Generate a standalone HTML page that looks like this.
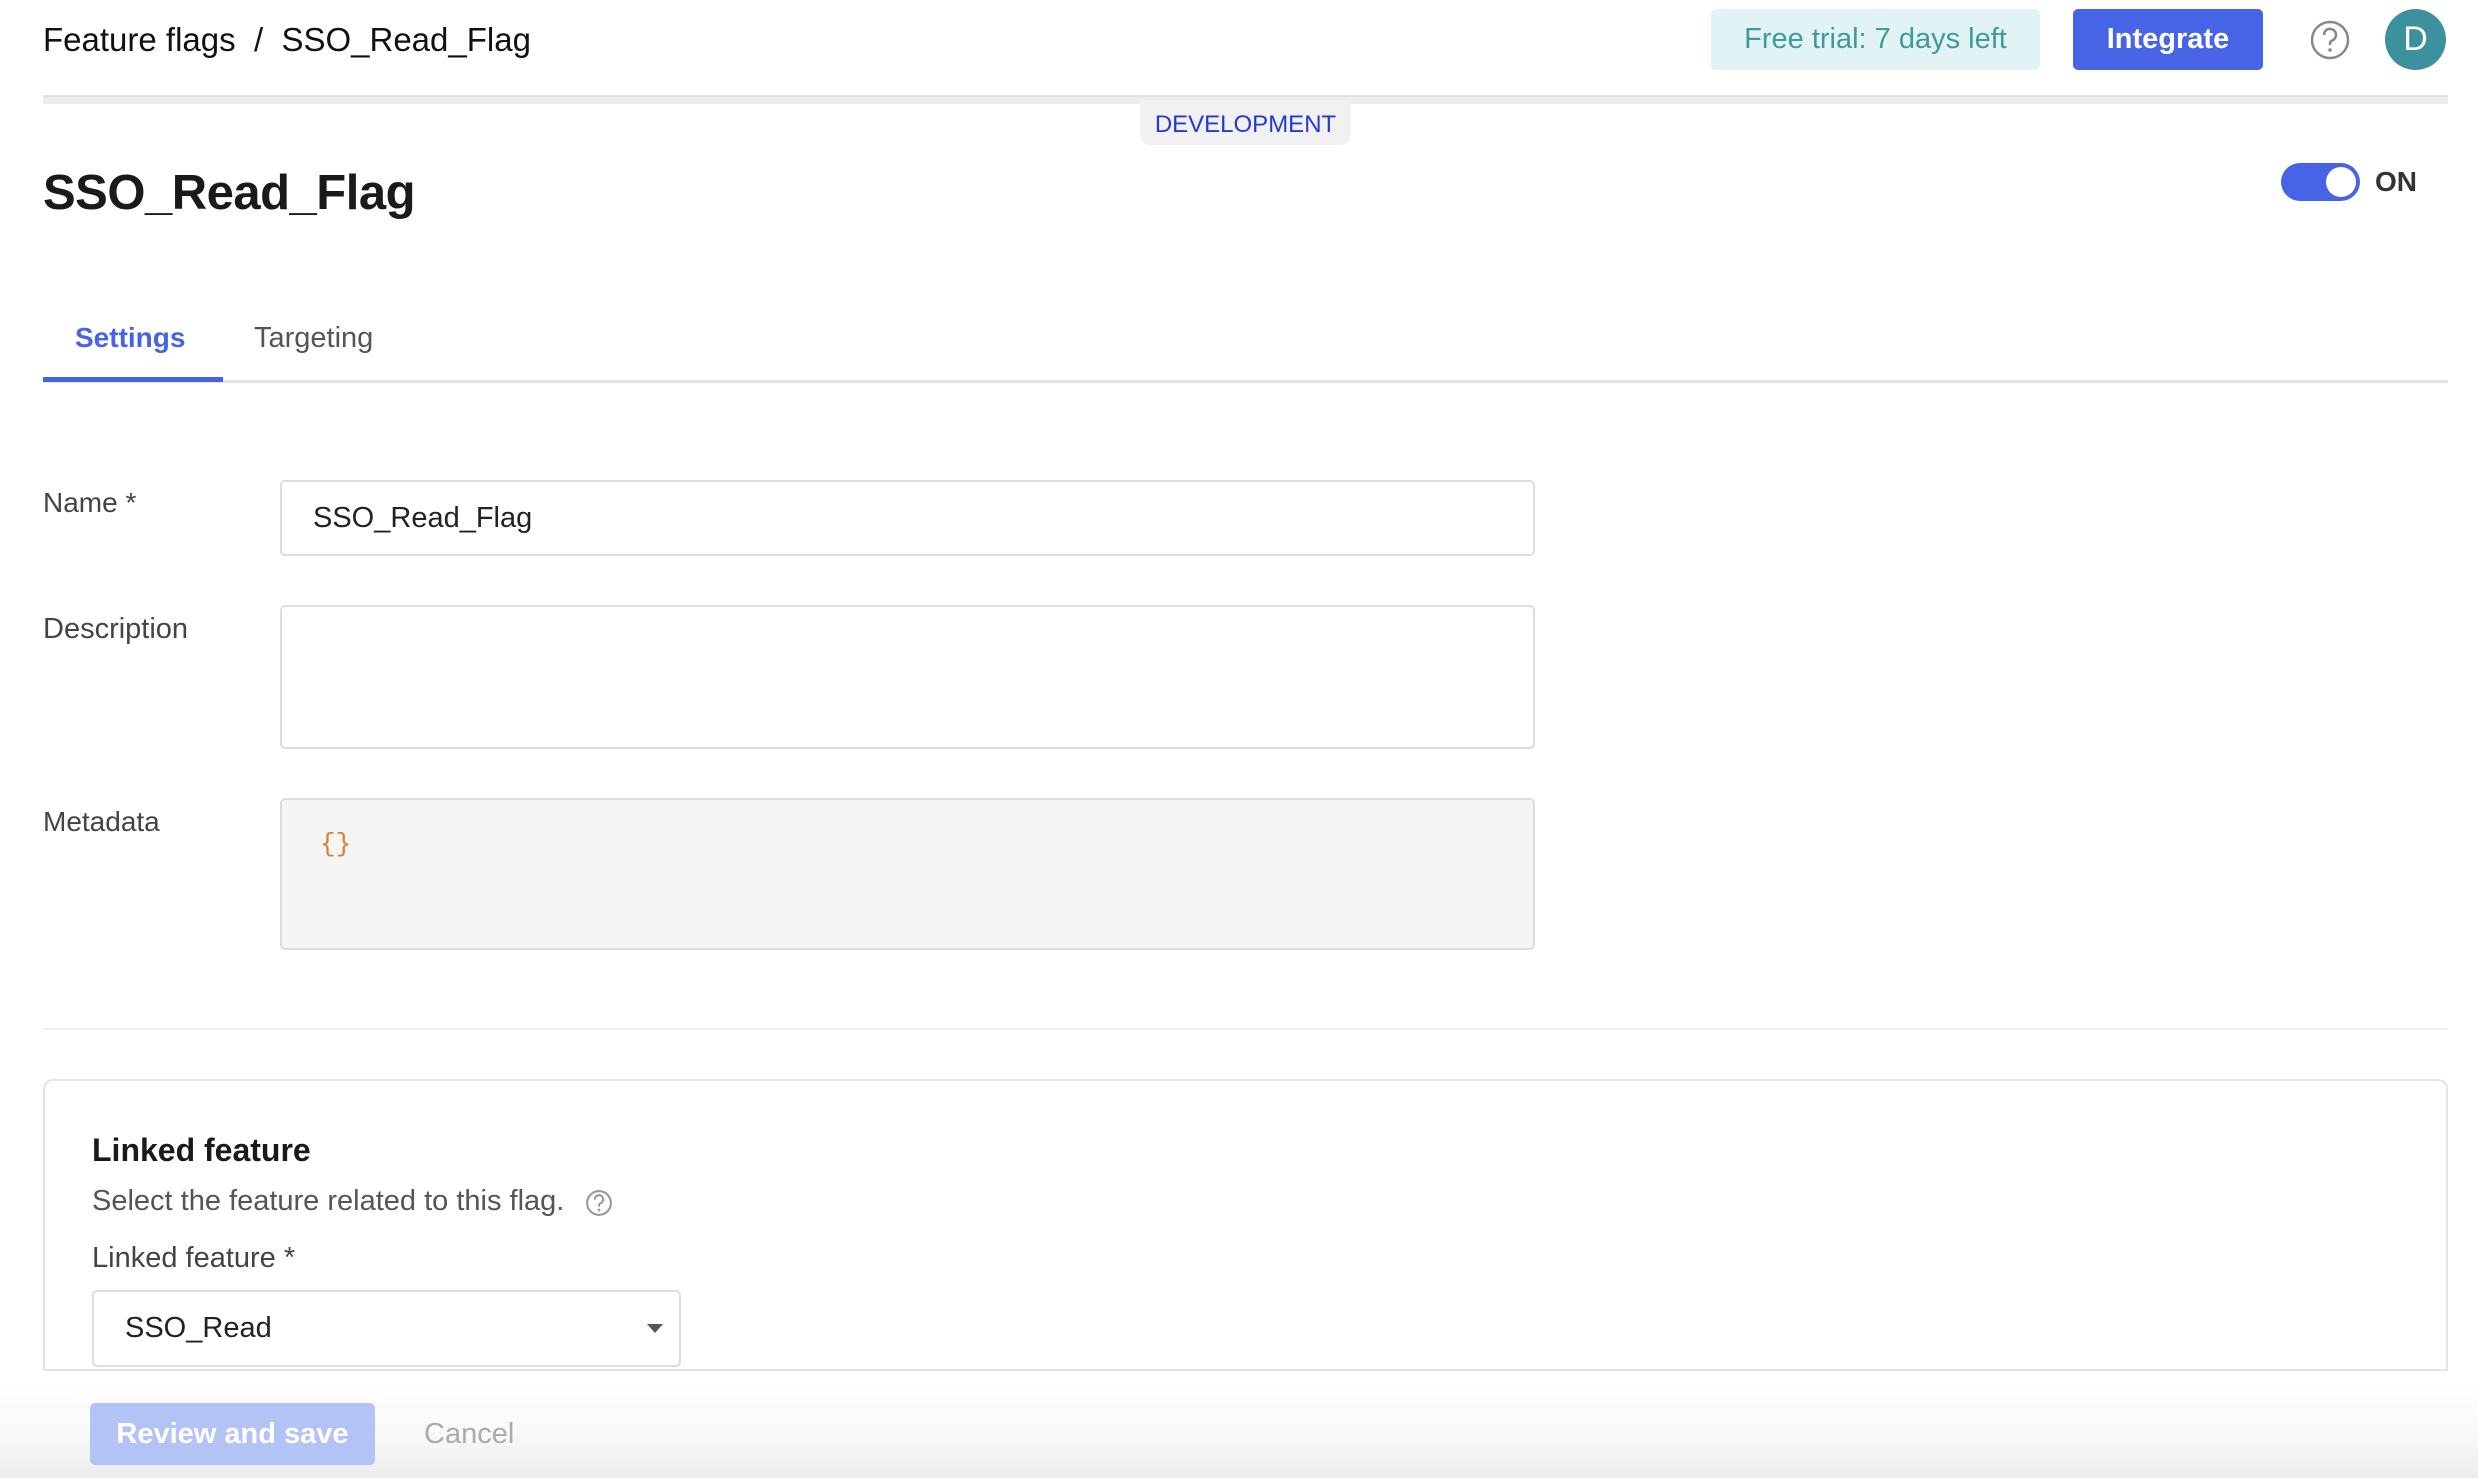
<!DOCTYPE html>
<html><head><meta charset="utf-8"><style>
*{box-sizing:border-box;margin:0;padding:0}
body{width:2478px;height:1478px;overflow:hidden;background:#fff;font-family:"Liberation Sans",sans-serif;color:#1a1a1a;position:relative}
.a{position:absolute}
</style></head><body>
<div class="a" style="left:43px;top:20px;font-size:33px;line-height:40px;color:#111">Feature flags &nbsp;/&nbsp; SSO_Read_Flag</div>
<div class="a" style="left:1711px;top:9px;width:329px;height:61px;background:#e2f3f5;border-radius:5px;color:#3f9a9a;font-size:29px;line-height:61px;text-align:center">Free trial: 7 days left</div>
<div class="a" style="left:2073px;top:9px;width:190px;height:61px;background:#4664e5;border-radius:5px;color:#fff;font-size:29px;line-height:61px;text-align:center;font-weight:bold">Integrate</div>
<svg class="a" style="left:2310px;top:20px" width="40" height="40" viewBox="0 0 40 40"><circle cx="20" cy="20" r="18" fill="none" stroke="#888" stroke-width="2.5"/><path d="M14 15a6 6 0 1 1 8 5.5c-1.5.7-2 1.5-2 3v1.5" fill="none" stroke="#888" stroke-width="2.5"/><circle cx="20" cy="30" r="1.8" fill="#888"/></svg>
<div class="a" style="left:2385px;top:9px;width:61px;height:61px;border-radius:50%;background:#3d919c;color:#fff;font-size:34px;line-height:61px;text-align:center">D</div>
<div class="a" style="left:43px;top:95px;width:2405px;height:9px;background:#ececec;border-top:2px solid #e2e2e2"></div>
<div class="a" style="left:1140px;top:100px;width:211px;height:45px;background:#f1f1f1;border-radius:0 0 10px 10px;color:#2438d6;font-size:24px;line-height:50px;text-align:center">DEVELOPMENT</div>
<div class="a" style="left:43px;top:160px;font-size:49px;line-height:66px;font-weight:bold;color:#1a1a1a;letter-spacing:-0.5px">SSO_Read_Flag</div>
<div class="a" style="left:2281px;top:163px;width:79px;height:38px;border-radius:19px;background:#4664e5"><div class="a" style="right:4px;top:4px;width:30px;height:30px;border-radius:50%;background:#fff"></div></div>
<div class="a" style="left:2375px;top:164px;font-size:28px;line-height:36px;font-weight:bold;color:#333">ON</div>
<div class="a" style="left:75px;top:320px;font-size:28px;line-height:36px;color:#4664e5;font-weight:bold">Settings</div>
<div class="a" style="left:254px;top:320px;font-size:29px;line-height:36px;color:#555">Targeting</div>
<div class="a" style="left:43px;top:380px;width:2405px;height:3px;background:#e3e3e3"></div>
<div class="a" style="left:43px;top:377px;width:180px;height:5px;background:#4664e5"></div>
<div class="a" style="left:43px;top:486px;font-size:28px;line-height:34px;color:#444">Name *</div>
<div class="a" style="left:280px;top:480px;width:1255px;height:76px;border:2px solid #ddd;border-radius:5px;font-size:29px;line-height:72px;padding-left:31px;color:#222">SSO_Read_Flag</div>
<div class="a" style="left:43px;top:612px;font-size:29px;line-height:34px;color:#444">Description</div>
<div class="a" style="left:280px;top:605px;width:1255px;height:144px;border:2px solid #ddd;border-radius:5px"></div>
<div class="a" style="left:43px;top:805px;font-size:28px;line-height:34px;color:#444">Metadata</div>
<div class="a" style="left:280px;top:798px;width:1255px;height:152px;border:2px solid #ddd;border-radius:5px;background:#f5f5f5"></div>
<div class="a" style="left:320px;top:828px;font-family:'Liberation Mono',monospace;font-size:26px;line-height:32px;color:#d9822b">{}</div>
<div class="a" style="left:43px;top:1028px;width:2405px;height:2px;background:#f0f0f3"></div>
<div class="a" style="left:43px;top:1079px;width:2405px;height:292px;border:2px solid #e3e3e3;border-radius:10px 10px 0 0"></div>
<div class="a" style="left:92px;top:1130px;font-size:32px;line-height:40px;font-weight:bold;color:#1a1a1a">Linked feature</div>
<div class="a" style="left:92px;top:1184px;font-size:29px;line-height:34px;color:#555">Select the feature related to this flag.</div>
<svg class="a" style="left:585px;top:1189px" width="28" height="28" viewBox="0 0 40 40"><circle cx="20" cy="20" r="17" fill="none" stroke="#999" stroke-width="3"/><path d="M14 15a6 6 0 1 1 8 5.5c-1.5.7-2 1.5-2 3v1.5" fill="none" stroke="#999" stroke-width="3"/><circle cx="20" cy="30" r="2" fill="#999"/></svg>
<div class="a" style="left:92px;top:1241px;font-size:29px;line-height:34px;color:#444">Linked feature *</div>
<div class="a" style="left:92px;top:1290px;width:589px;height:77px;border:2px solid #ddd;border-radius:5px;font-size:29px;line-height:73px;padding-left:31px;color:#222">SSO_Read</div>
<div class="a" style="left:647px;top:1324px;width:0;height:0;border-left:8px solid transparent;border-right:8px solid transparent;border-top:9px solid #555"></div>
<div class="a" style="left:0;top:1380px;width:2478px;height:98px;background:linear-gradient(#fff,#fafafa 50%,#ececec)"></div>
<div class="a" style="left:90px;top:1403px;width:285px;height:62px;background:#b3c3f6;border-radius:5px;color:#fff;font-size:29px;line-height:62px;text-align:center;font-weight:bold">Review and save</div>
<div class="a" style="left:424px;top:1403px;font-size:29px;line-height:62px;color:#aaa">Cancel</div>
</body></html>
